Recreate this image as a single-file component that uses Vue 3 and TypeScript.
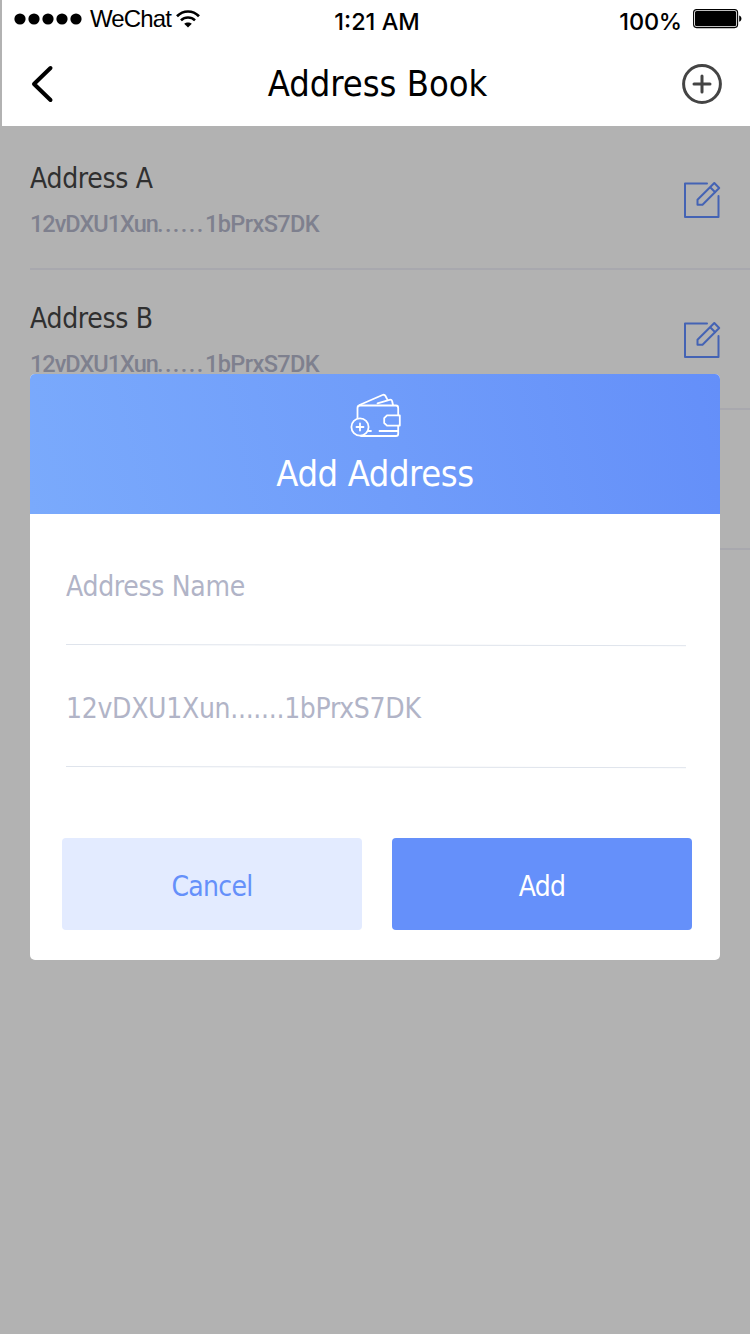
<script setup lang="ts">
interface AddressEntry {
  id: number
  name?: string
  head?: string
  tail?: string
}

const entries: AddressEntry[] = [
  { id: 1, name: 'Address A', head: '12vDXU1Xun', tail: '1bPrxS7DK' },
  { id: 2, name: 'Address B', head: '12vDXU1Xun', tail: '1bPrxS7DK' },
  { id: 3 },
]
</script>

<template>
  <div class="screen">
    <header class="top">
      <div class="status">
        <div class="carrier">
          <svg class="dots" width="68" height="12" viewBox="0 0 68 12">
            <circle v-for="n in 5" :key="n" :cx="n * 14 - 8" cy="6" r="5.6" />
          </svg>
          <span class="carrier-name">WeChat</span>
          <svg width="24" height="18" viewBox="0 0 24 18" fill="none" stroke="#000">
            <path d="M1 6.200C7.300 -.1 16.700 -.1 23 6.200" stroke-width="2.700" />
            <path d="M5 10.400C9 6.600 15 6.600 19 10.400" stroke-width="2.600" />
            <path d="M12 17.600L8.200 13.800C10.300 12 13.700 12 15.800 13.800Z" fill="#000" stroke="none" />
          </svg>
        </div>
        <div class="time">1:21 AM</div>
        <div class="power">
          <span class="percent">100%</span>
          <svg width="50" height="20" viewBox="0 0 50 20">
            <rect x=".6" y=".6" width="44" height="18" rx="3" fill="#fff" stroke="#000" stroke-width="1.1" />
            <rect x="2" y="2" width="41.200" height="15.200" rx="1.600" />
            <path d="M46.200 6.500C49.200 7.500 49.200 11.700 46.200 12.700Z" />
          </svg>
        </div>
      </div>
      <div class="nav">
        <svg width="24" height="40" viewBox="0 0 24 40" fill="none" stroke="#000" stroke-width="4" stroke-linecap="round" stroke-linejoin="round">
          <path d="M20.500 4L4 20L20.500 36" />
        </svg>
        <h1>Address Book</h1>
        <svg width="40" height="40" viewBox="0 0 40 40" fill="none" stroke="#444" stroke-width="3" stroke-linecap="round">
          <circle cx="20" cy="20" r="18.400" />
          <path d="M12 20H28M20 12V28" />
        </svg>
      </div>
    </header>

    <ul class="list">
      <li v-for="entry in entries" :key="entry.id">
        <template v-if="entry.name">
          <div class="entry">
            <div class="name">{{ entry.name }}</div>
            <div class="hash"><span class="hash-head">{{ entry.head }}</span><span class="hash-gap">......</span><span class="hash-tail">{{ entry.tail }}</span></div>
          </div>
          <svg width="38" height="38" viewBox="0 0 38 38" fill="none" stroke="#4463b4" stroke-width="2" stroke-linejoin="round" stroke-linecap="round">
            <path d="M24 2.500H2V36H35.500V15" />
            <path d="M14.500 23.700V18.700L31.300 2L36.200 7L19.500 23.700ZM27.200 6.300L32.200 11.200" />
          </svg>
        </template>
      </li>
    </ul>

    <section class="modal">
      <div class="modal-head">
        <svg width="52" height="46" viewBox="0 0 52 46" fill="none" stroke="#fff" stroke-width="1.800" stroke-linecap="round" stroke-linejoin="round">
          <circle cx="10" cy="35" r="8.600" />
          <path d="M6.500 35H13.500M10 31.500V38.500" />
          <path d="M7.500 26V16Q7.500 13.500 10 13.500H46Q48.200 13.500 48.200 16V23.300M48.200 33.700V42Q48.200 44 46 44H11" />
          <path d="M49.800 23.400H37L34.200 26.200V31L37 33.600H49.800Z" />
          <path d="M9.500 13L32.500 3Q34.500 2.200 35.500 4L37.500 7.800M27.500 11.300L39.500 7.800Q41.500 7.300 42.100 9L43 13M29.500 39H47.500M18.500 39H21" />
        </svg>
        <h2>Add Address</h2>
      </div>
      <div class="modal-body">
        <div class="field">
          <span class="label">Address Name</span>
          <svg width="620" height="4" viewBox="0 0 620 4"><path d="M0 1.500L620 2.700" stroke="#dfe4ec" /></svg>
        </div>
        <div class="field">
          <span class="label">12vDXU1Xun.......1bPrxS7DK</span>
          <svg width="620" height="4" viewBox="0 0 620 4"><path d="M0 1.500L620 2.700" stroke="#dfe4ec" /></svg>
        </div>
        <div class="actions">
          <button class="cancel" type="button">Cancel</button>
          <button class="add" type="button">Add</button>
        </div>
      </div>
    </section>
  </div>
</template>

<style>
body {
  margin: 0;
  background: #b2b2b2;
}
</style>

<style scoped>
* {
  box-sizing: border-box;
}
.screen {
  position: relative;
  width: 750px;
  height: 1334px;
  overflow: hidden;
  background: #b2b2b2;
  font-family: "DejaVu Sans Condensed", "DejaVu Sans", sans-serif;
  font-stretch: condensed;
}
svg {
  display: block;
  flex: none;
}
.top {
  height: 126px;
  margin-left: 2px;
  background: #fff;
}
.status {
  display: grid;
  grid-template-columns: 250px 250px 248px;
  height: 42px;
}
.carrier {
  display: flex;
  align-items: center;
  height: 38px;
  padding-left: 12px;
}
.carrier-name {
  width: 94px;
  padding-left: 8px;
  font: 24px/38px "Liberation Sans", sans-serif;
  letter-spacing: -0.85px;
  white-space: nowrap;
}
.time {
  font: 500 23.5px/44px Inter, sans-serif;
  text-align: center;
}
.power {
  display: flex;
  justify-content: flex-end;
  padding-right: 7px;
}
.percent {
  margin-right: 11px;
  font: 500 23.5px/44px Inter, sans-serif;
  letter-spacing: -0.2px;
}
.power svg {
  margin: 9px 0 0;
}
.nav {
  display: flex;
  align-items: center;
  justify-content: space-between;
  height: 84px;
  padding: 0 28px;
}
h1,
h2 {
  margin: 0;
  font-size: 36px;
  font-weight: 400;
  line-height: 44px;
  white-space: nowrap;
}
.nav h1 {
  margin-left: 19px;
}
.list {
  margin: 0;
  padding: 4px 0 0 30px;
  list-style: none;
}
.list li {
  display: flex;
  align-items: center;
  justify-content: space-between;
  height: 140px;
  padding: 2px 29px 0 0;
  border-bottom: 2px solid #a8a8ae;
}
.entry {
  padding-top: 2px;
}
.name {
  font-size: 28px;
  line-height: 46px;
  letter-spacing: -0.3px;
  color: #303030;
}
.hash {
  display: flex;
  font: 500 23.5px/44px Roboto, sans-serif;
  color: #7e808e;
}
.hash-head {
  width: 127px;
  letter-spacing: -1px;
}
.hash-gap {
  width: 48px;
  letter-spacing: 1.4px;
}
.hash-tail {
  letter-spacing: -0.6px;
}
.modal {
  position: absolute;
  top: 374px;
  left: 30px;
  width: 690px;
  height: 586px;
  overflow: hidden;
  border-radius: 5px;
  background: #fff;
}
.modal-head {
  display: flex;
  flex-direction: column;
  align-items: center;
  height: 140px;
  padding-top: 18px;
  background: linear-gradient(78deg, #7aaafc 0%, #709dfa 50%, #648ff9 100%);
  color: #fff;
}
.modal-head svg {
  margin-left: 1px;
}
.modal-head h2 {
  margin-top: 14px;
  letter-spacing: -0.4px;
}
.modal-body {
  padding: 11px 28px 30px 32px;
}
.field {
  height: 122px;
  padding: 40px 0 0 4px;
}
.label {
  display: block;
  height: 78px;
  font-size: 28px;
  line-height: 44px;
  letter-spacing: -0.3px;
  color: #b1b4c7;
  white-space: nowrap;
}
.actions {
  display: flex;
  gap: 30px;
  margin-top: 69px;
}
button {
  width: 300px;
  height: 92px;
  padding: 4px 0 0;
  border: 0;
  border-radius: 4px;
  font: inherit;
  font-size: 28px;
  letter-spacing: -0.7px;
}
.cancel {
  background: #e3ebff;
  color: #6590fa;
}
.add {
  background: #6590fa;
  color: #fff;
}
</style>
